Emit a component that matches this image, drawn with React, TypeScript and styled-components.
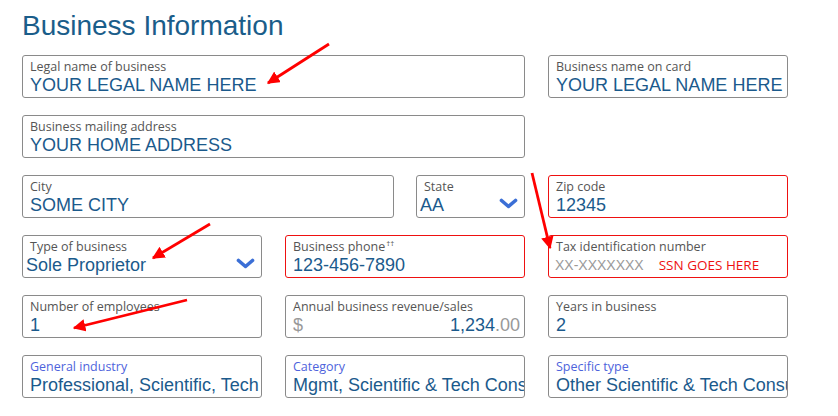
import styled, { createGlobalStyle } from "styled-components";

const GlobalStyle = createGlobalStyle`
  body {
    margin: 0;
    background: #ffffff;
  }
  * {
    box-sizing: border-box;
  }
`;

const Page = styled.div`
  position: relative;
  width: 838px;
  height: 416px;
  padding: 11px 0 0 22px;
  overflow: hidden;
`;

const Title = styled.h1`
  margin: 0 0 14px;
  font-family: "Liberation Sans", Arial, sans-serif;
  font-size: 28px;
  line-height: 30px;
  font-weight: 400;
  color: #1a5d8a;
`;

const Grid = styled.div`
  display: grid;
  grid-template-columns: repeat(3, 240px);
  grid-auto-rows: 43px;
  column-gap: 23px;
  row-gap: 17px;
`;

const Split = styled.div`
  grid-column: span 2;
  display: grid;
  grid-template-columns: 1fr 109px;
  column-gap: 22px;
`;

const Field = styled.div<{ $error?: boolean; $span?: number }>`
  position: relative;
  grid-column: span ${(p) => p.$span || 1};
  border: 1px solid ${(p) => (p.$error ? "#ee1111" : "#8a8a8a")};
  border-radius: 3px;
  padding-top: 4px;
  background: #fff;
`;

const Label = styled.div<{ $blue?: boolean }>`
  padding-left: 7px;
  font-family: "Open Sans", sans-serif;
  font-size: 12.5px;
  line-height: 14px;
  color: ${(p) => (p.$blue ? "#4e63dc" : "#555555")};
  white-space: nowrap;

  sup {
    font-size: 8px;
    line-height: 0;
    vertical-align: 5px;
    margin-left: 1px;
  }
`;

const Value = styled.div<{ $select?: boolean }>`
  padding-left: ${(p) => (p.$select ? "3px" : "7px")};
  font-family: "Liberation Sans", Arial, sans-serif;
  font-size: 18px;
  line-height: 22px;
  color: #1b5a8c;
  white-space: nowrap;
  overflow: hidden;
`;

const Money = styled.div`
  display: flex;
  justify-content: space-between;
  padding: 0 4px 0 7px;
  font-family: "Liberation Sans", Arial, sans-serif;
  font-size: 18px;
  line-height: 22px;
  color: #1b5a8c;
`;

const Muted = styled.span`
  color: #999999;
`;

const TaxRow = styled.div`
  display: flex;
  align-items: baseline;
  padding-left: 6px;
  line-height: 22px;
  white-space: nowrap;
`;

const Placeholder = styled.span`
  font-family: "Liberation Sans", Arial, sans-serif;
  font-size: 14px;
  color: #9a9a9a;
`;

const Note = styled.span`
  margin-left: 15px;
  font-family: "Open Sans", sans-serif;
  font-size: 13.5px;
  color: #ee1111;
`;

const Chevron = styled.svg`
  position: absolute;
  right: 6px;
  bottom: 8px;
  width: 19px;
  height: 11px;
`;

const Overlay = styled.svg`
  position: absolute;
  left: 0;
  top: 0;
  pointer-events: none;
`;

function Caret() {
  return (
    <Chevron viewBox="0 0 19 11">
      <polyline
        points="2.5,2.5 9.5,8.5 16.5,2.5"
        fill="none"
        stroke="#3b6fd6"
        strokeWidth="3.6"
        strokeLinecap="round"
        strokeLinejoin="round"
      />
    </Chevron>
  );
}

const arrows = [
  { x1: 329, y1: 44, x2: 268, y2: 83 },
  { x1: 532, y1: 173, x2: 550, y2: 248 },
  { x1: 210, y1: 224, x2: 153, y2: 258 },
  { x1: 187, y1: 300, x2: 74, y2: 328 },
];

function App() {
  return (
    <Page>
      <GlobalStyle />
      <Title>Business Information</Title>
      <Grid>
        <Field $span={2}>
          <Label>Legal name of business</Label>
          <Value>YOUR LEGAL NAME HERE</Value>
        </Field>
        <Field>
          <Label>Business name on card</Label>
          <Value>YOUR LEGAL NAME HERE</Value>
        </Field>

        <Field $span={2}>
          <Label>Business mailing address</Label>
          <Value>YOUR HOME ADDRESS</Value>
        </Field>
        <div />

        <Split>
          <Field>
            <Label>City</Label>
            <Value>SOME CITY</Value>
          </Field>
          <Field>
            <Label>State</Label>
            <Value $select>AA</Value>
            <Caret />
          </Field>
        </Split>
        <Field $error>
          <Label>Zip code</Label>
          <Value>12345</Value>
        </Field>

        <Field>
          <Label>Type of business</Label>
          <Value $select>Sole Proprietor</Value>
          <Caret />
        </Field>
        <Field $error>
          <Label>
            Business phone<sup>††</sup>
          </Label>
          <Value>123-456-7890</Value>
        </Field>
        <Field $error>
          <Label>Tax identification number</Label>
          <TaxRow>
            <Placeholder>XX-XXXXXXX</Placeholder>
            <Note>SSN GOES HERE</Note>
          </TaxRow>
        </Field>

        <Field>
          <Label>Number of employees</Label>
          <Value>1</Value>
        </Field>
        <Field>
          <Label>Annual business revenue/sales</Label>
          <Money>
            <Muted>$</Muted>
            <span>
              1,234<Muted>.00</Muted>
            </span>
          </Money>
        </Field>
        <Field>
          <Label>Years in business</Label>
          <Value>2</Value>
        </Field>

        <Field>
          <Label $blue>General industry</Label>
          <Value>Professional, Scientific, Tech Services</Value>
        </Field>
        <Field>
          <Label $blue>Category</Label>
          <Value>Mgmt, Scientific &amp; Tech Consulting</Value>
        </Field>
        <Field>
          <Label $blue>Specific type</Label>
          <Value>Other Scientific &amp; Tech Consulting Services</Value>
        </Field>
      </Grid>

      <Overlay width="838" height="416" viewBox="0 0 838 416">
        <defs>
          <marker
            id="head"
            viewBox="0 0 10 10"
            refX="9"
            refY="5"
            markerWidth="4.5"
            markerHeight="4.5"
            orient="auto"
          >
            <path d="M0,0 L10,5 L0,10 z" fill="#ff0000" />
          </marker>
        </defs>
        {arrows.map((a, i) => (
          <line
            key={i}
            x1={a.x1}
            y1={a.y1}
            x2={a.x2}
            y2={a.y2}
            stroke="#ff0000"
            strokeWidth="2.8"
            markerEnd="url(#head)"
          />
        ))}
      </Overlay>
    </Page>
  );
}

export default App;
